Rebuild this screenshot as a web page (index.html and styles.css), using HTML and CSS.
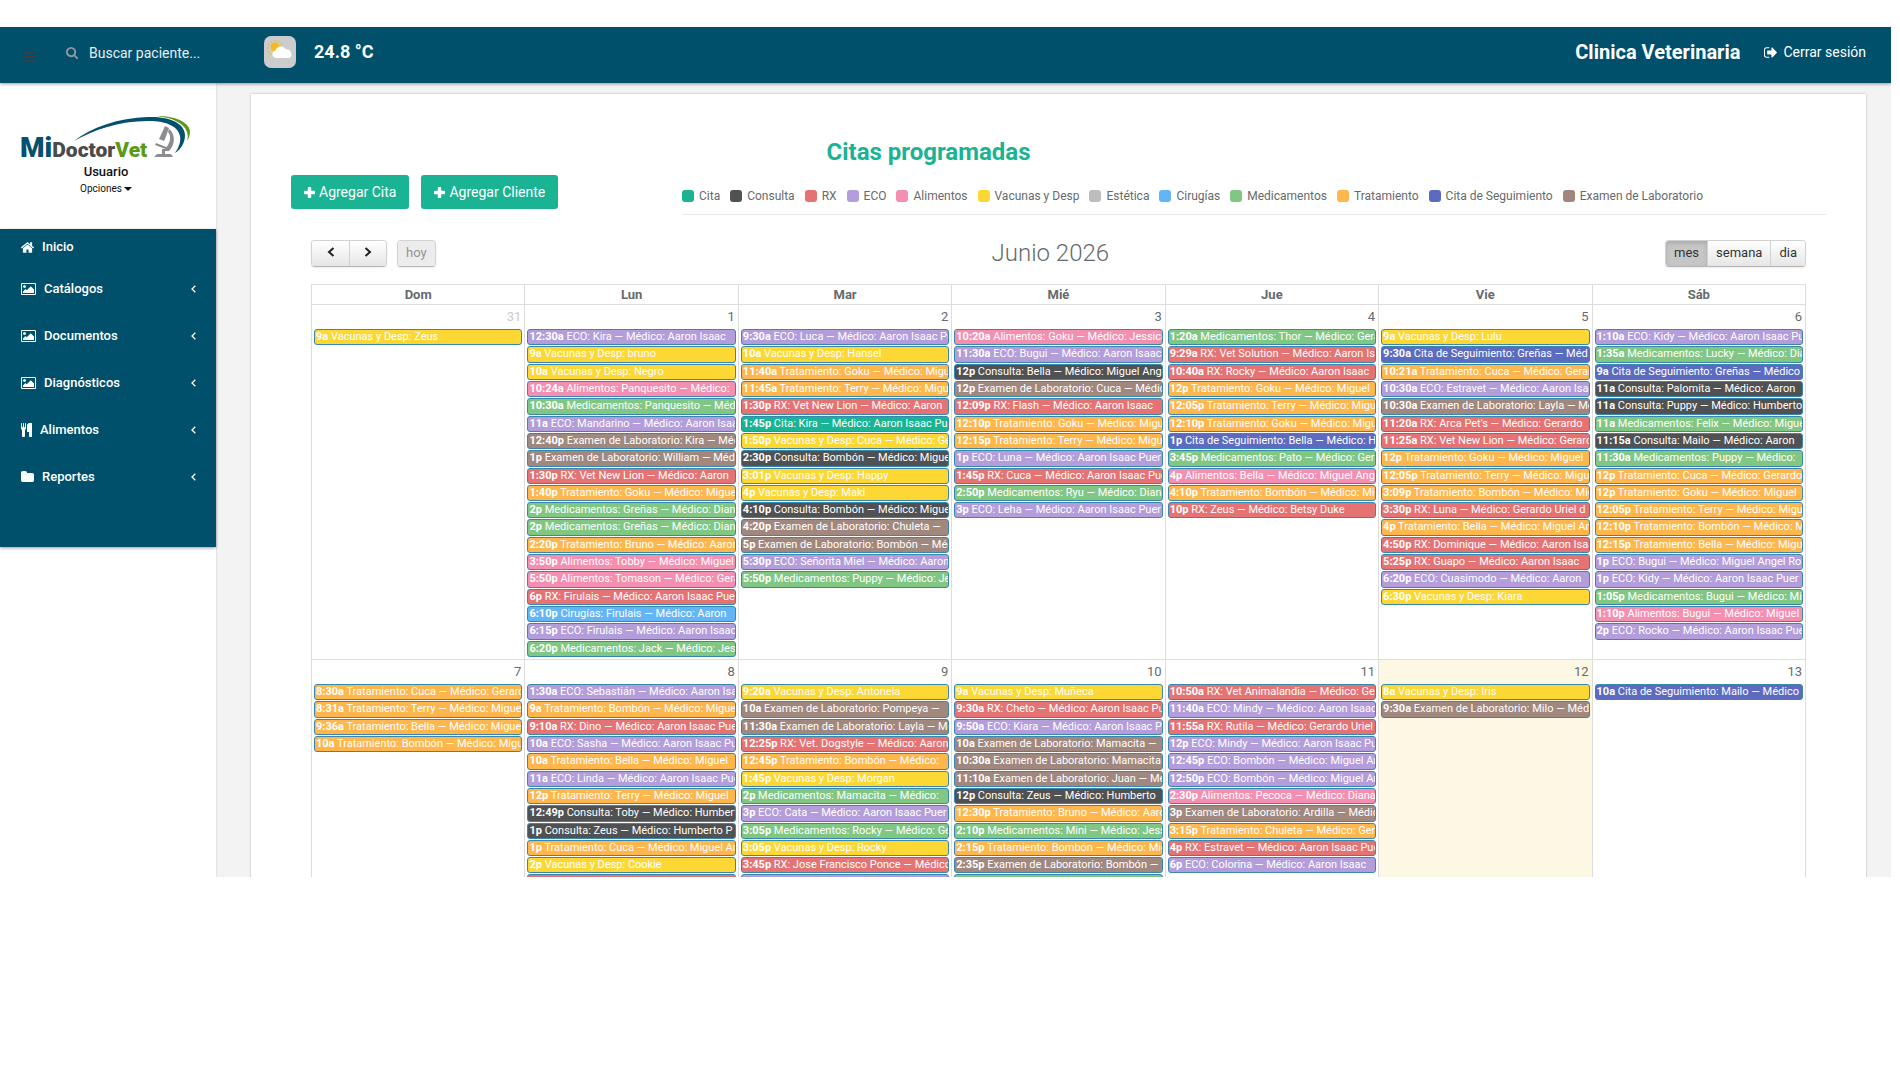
FILE: index.html
```html
<!DOCTYPE html>
<html lang="es">
<head>
<meta charset="utf-8">
<title>Citas programadas</title>
<link rel="stylesheet" href="styles.css">
</head>
<body>
<svg class="defs" aria-hidden="true">
  <symbol id="i-image" viewBox="-64 128 1920 1536"><path d="M576 576q0 80-56 136t-136 56-136-56-56-136 56-136 136-56 136 56 56 136zm1024 384v448h-1408v-192l320-320 160 160 512-512zm96-704h-1600q-13 0-22.500 9.500t-9.500 22.500v1216q0 13 9.500 22.500t22.500 9.500h1600q13 0 22.500-9.500t9.500-22.500v-1216q0-13-9.500-22.500t-22.500-9.500zm160 32v1216q0 66-47 113t-113 47h-1600q-66 0-113-47t-47-113v-1216q0-66 47-113t113-47h1600q66 0 113 47t47 113z"/></symbol>
  <symbol id="i-left" viewBox="0 0 5 8"><path d="M4.300.7L1 4l3.300 3.300" fill="none" stroke="currentColor" stroke-width="1.300"/></symbol>
  <symbol id="i-plus" viewBox="0 0 11 11"><path d="M4.500 0h2q.7 0 .7.700v3.100h3.100q.7 0 .7.700v2q0 .7-.7.700H7.200v3.100q0 .7-.7.700h-2q-.7 0-.7-.7V7.200H.7q-.7 0-.7-.7v-2q0-.7.700-.7h3.100V.7q0-.7.700-.7z"/></symbol>
</svg>
<div class="app">
  <header class="topbar">
    <button class="menu-btn" type="button" aria-label="Menú"><svg width="12" height="11" viewBox="0 0 12 11"><path d="M0 0h12v2H0zM0 4h12v2H0zM0 8h12v2H0z"/></svg></button>
    <form class="search">
      <label for="q" aria-label="Buscar"><svg width="12" height="12" viewBox="64 128 1664 1664"><path d="M1216 832q0-185-131.500-316.500t-316.500-131.500-316.500 131.500-131.500 316.500 131.500 316.500 316.500 131.500 316.500-131.500 131.500-316.500zm512 832q0 52-38 90t-90 38q-54 0-90-38l-343-342q-179 124-399 124-143 0-273.500-55.500t-225-150-150-225-55.500-273.500 55.500-273.500 150-225 225-150 273.500-55.500 273.500 55.500 225 150 150 225 55.500 273.500q0 220-124 399l343 343q37 37 37 90z"/></svg></label>
      <input id="q" type="text" placeholder="Buscar paciente...">
    </form>
    <svg class="weather" width="32" height="32" viewBox="0 0 32 32">
      <rect width="32" height="32" rx="7" fill="#cbcccd"/>
      <g fill="#f5b921"><circle cx="11" cy="11" r="4.500"/><g stroke="#f5b921" stroke-width="1.400" stroke-linecap="round"><path d="M11 5V4.600M7.500 6L7.200 5.500M14.500 6l.3-.5M5 8.500l-.5-.3M17 8.500l.5-.3M4 12h-.4M5 15.500l-.5.300M7 18l-.3.400"/></g></g>
      <path d="M12 22a3.800 3.800 0 0 1-.6-7.500 5.600 5.600 0 0 1 10.300-1.200 4.300 4.300 0 0 1 2 8.700z" fill="#fff"/>
      <circle cx="24.500" cy="19" r="3" fill="#fff"/>
    </svg>
    <span class="temp">24.8 °C</span>
    <span class="clinic">Clinica Veterinaria</span>
    <a class="logout" href="#"><svg width="13" height="11" viewBox="64 256 1568 1280"><path d="M704 1440q0 4 1 20t.5 26.500-3 23.500-10 19.500-20.500 6.500h-320q-119 0-203.500-84.500t-84.500-203.500v-704q0-119 84.500-203.500t203.500-84.500h320q13 0 22.500 9.500t9.500 22.500q0 4 1 20t.5 26.500-3 23.500-10 19.500-20.500 6.500h-320q-66 0-113 47t-47 113v704q0 66 47 113t113 47h312l11.500 1 11.500 3 8 5.500 7 9 2 13.500zm928-544q0 26-19 45l-544 544q-19 19-45 19t-45-19-19-45v-288h-448q-26 0-45-19t-19-45v-384q0-26 19-45t45-19h448v-288q0-26 19-45t45-19 45 19l544 544q19 19 19 45z"/></svg>Cerrar sesión</a>
  </header>
  <div class="body">
    <aside class="sidebar">
      <div class="profile">
        <svg class="logo" width="172" height="46" viewBox="0 0 172 46" role="img" aria-label="MiDoctorVet">
          <path d="M54 26C72 12 98 3 128 2c26-1 37 9 37 18 0 8-4 14-10 18 4-6 6-11 5-17C158 12 148 6 128 6 98 6 74 15 54 26z" fill="#05506e"/>
          <path d="M137 1c22 0 33 8 33 16 0 3-1 6-3 9 1-3 1-6 0-9-3-9-14-14-30-16z" fill="#5a9a16"/>
          <text class="logo-text" x="0" y="42"><tspan class="t-mi">Mi</tspan><tspan class="t-doctor">Doctor</tspan><tspan class="t-vet">Vet</tspan></text>
          <g fill="#8b8d90"><path d="M145 11l4 2-4 11-5-2zM140 22l5 2-1 2-5-2z"/><path d="M149 14c6 4 7 15 0 22h-4v-2c5-5 7-13 3-17zM136 28l13 5-1 2-13-5zM137 39h14l2 3h-19z"/><path d="M142 34h3v6h-3z"/></g>
        </svg>
        <strong class="user">Usuario</strong>
        <a class="options" href="#">Opciones<span class="caret"></span></a>
      </div>
      <nav class="nav">
        <a class="first" href="#"><svg width="13" height="11" viewBox="89 253 1614 1283"><path d="M1472 992v480q0 26-19 45t-45 19h-384v-384h-256v384h-384q-26 0-45-19t-19-45v-480q0-1 .5-3t.5-3l575-474 575 474q1 2 1 6zm223-69l-62 74q-8 9-21 11h-3q-13 0-21-7l-692-577-692 577q-12 8-24 7-13-2-21-11l-62-74q-8-10-7-23.500t11-21.500l719-599q32-26 76-26t76 26l244 204v-195q0-14 9-23t23-9h192q14 0 23 9t9 23v408l219 182q10 8 11 21.500t-7 23.500z"/></svg>Inicio</a>
        <a href="#"><svg width="15" height="12"><use href="#i-image"/></svg>Catálogos<svg class="arrow" width="5" height="8"><use href="#i-left"/></svg></a>
        <a href="#"><svg width="15" height="12"><use href="#i-image"/></svg>Documentos<svg class="arrow" width="5" height="8"><use href="#i-left"/></svg></a>
        <a href="#"><svg width="15" height="12"><use href="#i-image"/></svg>Diagnósticos<svg class="arrow" width="5" height="8"><use href="#i-left"/></svg></a>
        <a href="#"><svg width="11" height="14" viewBox="192 0 1408 1792"><path d="M832 64v640q0 61-35.500 111t-92.500 70v779q0 52-38 90t-90 38h-128q-52 0-90-38t-38-90v-779q-57-20-92.500-70t-35.500-111v-640q0-26 19-45t45-19 45 19 19 45v416q0 26 19 45t45 19 45-19 19-45v-416q0-26 19-45t45-19 45 19 19 45v416q0 26 19 45t45 19 45-19 19-45v-416q0-26 19-45t45-19 45 19 19 45zm768 0v1600q0 52-38 90t-90 38h-128q-52 0-90-38t-38-90v-512h-224q-13 0-22.500-9.500t-9.500-22.500v-800q0-132 94-226t226-94h256q26 0 45 19t19 45z"/></svg>Alimentos<svg class="arrow" width="5" height="8"><use href="#i-left"/></svg></a>
        <a href="#"><svg width="13" height="11" viewBox="64 128 1664 1408"><path d="M1728 608v704q0 92-66 158t-158 66h-1216q-92 0-158-66t-66-158v-960q0-92 66-158t158-66h320q92 0 158 66t66 158v32h672q92 0 158 66t66 158z"/></svg>Reportes<svg class="arrow" width="5" height="8"><use href="#i-left"/></svg></a>
      </nav>
    </aside>
    <main class="main">
      <section class="card">
        <h1>Citas programadas</h1>
        <div class="tools">
          <div class="actions">
            <button type="button"><svg width="11" height="11"><use href="#i-plus"/></svg>Agregar Cita</button>
            <button type="button"><svg width="11" height="11"><use href="#i-plus"/></svg>Agregar Cliente</button>
          </div>
          <ul class="legend">
            <li><i class="cita"></i>Cita</li><li><i class="con"></i>Consulta</li><li><i class="rx"></i>RX</li><li><i class="eco"></i>ECO</li><li><i class="ali"></i>Alimentos</li><li><i class="vac"></i>Vacunas y Desp</li><li><i class="est"></i>Estética</li><li><i class="cir"></i>Cirugías</li><li><i class="med"></i>Medicamentos</li><li><i class="tra"></i>Tratamiento</li><li><i class="seg"></i>Cita de Seguimiento</li><li><i class="lab"></i>Examen de Laboratorio</li>
          </ul>
        </div>
        <div class="calendar">
          <div class="cal-bar">
            <div class="left">
              <div class="group">
                <button class="step" type="button" aria-label="Anterior"><svg width="8" height="10" viewBox="0 0 8 10"><path d="M6.500 1L2 5l4.500 4"/></svg></button><button class="step" type="button" aria-label="Siguiente"><svg width="8" height="10" viewBox="0 0 8 10"><path d="M1.500 1L6 5 1.500 9"/></svg></button>
              </div>
              <div class="group"><button type="button" disabled>hoy</button></div>
            </div>
            <h2>Junio 2026</h2>
            <div class="right"><div class="group"><button class="on" type="button">mes</button><button type="button">semana</button><button type="button">dia</button></div></div>
          </div>
          <table>
            <thead><tr><th>Dom</th><th>Lun</th><th>Mar</th><th>Mié</th><th>Jue</th><th>Vie</th><th>Sáb</th></tr></thead>
            <tbody>
              <tr>
                <td><span class="num other">31</span><ul class="events">
                  <li class="vac"><b>9a</b> Vacunas y Desp: Zeus</li>
                </ul></td>
                <td><span class="num">1</span><ul class="events">
                  <li class="eco"><b>12:30a</b> ECO: Kira — Médico: Aaron Isaac</li>
                  <li class="vac"><b>9a</b> Vacunas y Desp: bruno</li>
                  <li class="vac"><b>10a</b> Vacunas y Desp: Negro</li>
                  <li class="ali"><b>10:24a</b> Alimentos: Panquesito — Médico:</li>
                  <li class="med"><b>10:30a</b> Medicamentos: Panquesito — Méd</li>
                  <li class="eco"><b>11a</b> ECO: Mandarino — Médico: Aaron Isaac</li>
                  <li class="lab"><b>12:40p</b> Examen de Laboratorio: Kira — Méd</li>
                  <li class="lab"><b>1p</b> Examen de Laboratorio: William — Méd</li>
                  <li class="rx"><b>1:30p</b> RX: Vet New Lion — Médico: Aaron</li>
                  <li class="tra"><b>1:40p</b> Tratamiento: Goku — Médico: Miguel</li>
                  <li class="med"><b>2p</b> Medicamentos: Greñas — Médico: Diana</li>
                  <li class="med"><b>2p</b> Medicamentos: Greñas — Médico: Diana</li>
                  <li class="tra"><b>2:20p</b> Tratamiento: Bruno — Médico: Aaron</li>
                  <li class="ali"><b>3:50p</b> Alimentos: Tobby — Médico: Miguel</li>
                  <li class="ali"><b>5:50p</b> Alimentos: Tomason — Médico: Gerardo</li>
                  <li class="rx"><b>6p</b> RX: Firulais — Médico: Aaron Isaac Puer</li>
                  <li class="cir"><b>6:10p</b> Cirugías: Firulais — Médico: Aaron</li>
                  <li class="eco"><b>6:15p</b> ECO: Firulais — Médico: Aaron Isaac</li>
                  <li class="med"><b>6:20p</b> Medicamentos: Jack — Médico: Jessica</li>
                </ul></td>
                <td><span class="num">2</span><ul class="events">
                  <li class="eco"><b>9:30a</b> ECO: Luca — Médico: Aaron Isaac Puer</li>
                  <li class="vac"><b>10a</b> Vacunas y Desp: Hansel</li>
                  <li class="tra"><b>11:40a</b> Tratamiento: Goku — Médico: Miguel</li>
                  <li class="tra"><b>11:45a</b> Tratamiento: Terry — Médico: Miguel</li>
                  <li class="rx"><b>1:30p</b> RX: Vet New Lion — Médico: Aaron</li>
                  <li class="cita"><b>1:45p</b> Cita: Kira — Médico: Aaron Isaac Puer</li>
                  <li class="vac"><b>1:50p</b> Vacunas y Desp: Cuca — Médico: Gerardo</li>
                  <li class="con"><b>2:30p</b> Consulta: Bombón — Médico: Miguel</li>
                  <li class="vac"><b>3:01p</b> Vacunas y Desp: Happy</li>
                  <li class="vac"><b>4p</b> Vacunas y Desp: Maki</li>
                  <li class="con"><b>4:10p</b> Consulta: Bombón — Médico: Miguel</li>
                  <li class="lab"><b>4:20p</b> Examen de Laboratorio: Chuleta —</li>
                  <li class="lab"><b>5p</b> Examen de Laboratorio: Bombón — Méd</li>
                  <li class="eco"><b>5:30p</b> ECO: Señorita Miel — Médico: Aaron</li>
                  <li class="med"><b>5:50p</b> Medicamentos: Puppy — Médico: Jessica</li>
                </ul></td>
                <td><span class="num">3</span><ul class="events">
                  <li class="ali"><b>10:20a</b> Alimentos: Goku — Médico: Jessica</li>
                  <li class="eco"><b>11:30a</b> ECO: Bugui — Médico: Aaron Isaac</li>
                  <li class="con"><b>12p</b> Consulta: Bella — Médico: Miguel Angel</li>
                  <li class="lab"><b>12p</b> Examen de Laboratorio: Cuca — Médico</li>
                  <li class="rx"><b>12:09p</b> RX: Flash — Médico: Aaron Isaac</li>
                  <li class="tra"><b>12:10p</b> Tratamiento: Goku — Médico: Miguel</li>
                  <li class="tra"><b>12:15p</b> Tratamiento: Terry — Médico: Miguel</li>
                  <li class="eco"><b>1p</b> ECO: Luna — Médico: Aaron Isaac Puer</li>
                  <li class="rx"><b>1:45p</b> RX: Cuca — Médico: Aaron Isaac Puer</li>
                  <li class="med"><b>2:50p</b> Medicamentos: Ryu — Médico: Diana</li>
                  <li class="eco"><b>3p</b> ECO: Leha — Médico: Aaron Isaac Puer</li>
                </ul></td>
                <td><span class="num">4</span><ul class="events">
                  <li class="med"><b>1:20a</b> Medicamentos: Thor — Médico: Gerardo</li>
                  <li class="rx"><b>9:29a</b> RX: Vet Solution — Médico: Aaron Isaac</li>
                  <li class="rx"><b>10:40a</b> RX: Rocky — Médico: Aaron Isaac</li>
                  <li class="tra"><b>12p</b> Tratamiento: Goku — Médico: Miguel</li>
                  <li class="tra"><b>12:05p</b> Tratamiento: Terry — Médico: Miguel</li>
                  <li class="tra"><b>12:10p</b> Tratamiento: Goku — Médico: Miguel</li>
                  <li class="seg"><b>1p</b> Cita de Seguimiento: Bella — Médico: H</li>
                  <li class="med"><b>3:45p</b> Medicamentos: Pato — Médico: Gerardo</li>
                  <li class="ali"><b>4p</b> Alimentos: Bella — Médico: Miguel Angel</li>
                  <li class="tra"><b>4:10p</b> Tratamiento: Bombón — Médico: Miguel</li>
                  <li class="rx"><b>10p</b> RX: Zeus — Médico: Betsy Duke</li>
                </ul></td>
                <td><span class="num">5</span><ul class="events">
                  <li class="vac"><b>9a</b> Vacunas y Desp: Lulu</li>
                  <li class="seg"><b>9:30a</b> Cita de Seguimiento: Greñas — Méd</li>
                  <li class="tra"><b>10:21a</b> Tratamiento: Cuca — Médico: Gerardo</li>
                  <li class="eco"><b>10:30a</b> ECO: Estravet — Médico: Aaron Isaac</li>
                  <li class="lab"><b>10:30a</b> Examen de Laboratorio: Layla — Méd</li>
                  <li class="rx"><b>11:20a</b> RX: Arca Pet's — Médico: Gerardo</li>
                  <li class="rx"><b>11:25a</b> RX: Vet New Lion — Médico: Gerardo</li>
                  <li class="tra"><b>12p</b> Tratamiento: Goku — Médico: Miguel</li>
                  <li class="tra"><b>12:05p</b> Tratamiento: Terry — Médico: Miguel</li>
                  <li class="tra"><b>3:09p</b> Tratamiento: Bombón — Médico: Miguel</li>
                  <li class="rx"><b>3:30p</b> RX: Luna — Médico: Gerardo Uriel d</li>
                  <li class="tra"><b>4p</b> Tratamiento: Bella — Médico: Miguel An</li>
                  <li class="rx"><b>4:50p</b> RX: Dominique — Médico: Aaron Isaac</li>
                  <li class="rx"><b>5:25p</b> RX: Guapo — Médico: Aaron Isaac</li>
                  <li class="eco"><b>6:20p</b> ECO: Cuasimodo — Médico: Aaron</li>
                  <li class="vac"><b>6:30p</b> Vacunas y Desp: Kiara</li>
                </ul></td>
                <td><span class="num">6</span><ul class="events">
                  <li class="eco"><b>1:10a</b> ECO: Kidy — Médico: Aaron Isaac Puer</li>
                  <li class="med"><b>1:35a</b> Medicamentos: Lucky — Médico: Diana</li>
                  <li class="seg"><b>9a</b> Cita de Seguimiento: Greñas — Médico</li>
                  <li class="con"><b>11a</b> Consulta: Palomita — Médico: Aaron</li>
                  <li class="con"><b>11a</b> Consulta: Puppy — Médico: Humberto</li>
                  <li class="med"><b>11a</b> Medicamentos: Felix — Médico: Miguel</li>
                  <li class="con"><b>11:15a</b> Consulta: Mailo — Médico: Aaron</li>
                  <li class="med"><b>11:30a</b> Medicamentos: Puppy — Médico:</li>
                  <li class="tra"><b>12p</b> Tratamiento: Cuca — Médico: Gerardo</li>
                  <li class="tra"><b>12p</b> Tratamiento: Goku — Médico: Miguel</li>
                  <li class="tra"><b>12:05p</b> Tratamiento: Terry — Médico: Miguel</li>
                  <li class="tra"><b>12:10p</b> Tratamiento: Bombón — Médico: M</li>
                  <li class="tra"><b>12:15p</b> Tratamiento: Bella — Médico: Miguel</li>
                  <li class="eco"><b>1p</b> ECO: Bugui — Médico: Miguel Angel Ro</li>
                  <li class="eco"><b>1p</b> ECO: Kidy — Médico: Aaron Isaac Puer</li>
                  <li class="med"><b>1:05p</b> Medicamentos: Bugui — Médico: Miguel</li>
                  <li class="ali"><b>1:10p</b> Alimentos: Bugui — Médico: Miguel</li>
                  <li class="eco"><b>2p</b> ECO: Rocko — Médico: Aaron Isaac Puer</li>
                </ul></td>
              </tr>
              <tr>
                <td><span class="num">7</span><ul class="events">
                  <li class="tra"><b>8:30a</b> Tratamiento: Cuca — Médico: Gerardo</li>
                  <li class="tra"><b>8:31a</b> Tratamiento: Terry — Médico: Miguel</li>
                  <li class="tra"><b>9:36a</b> Tratamiento: Bella — Médico: Miguel</li>
                  <li class="tra"><b>10a</b> Tratamiento: Bombón — Médico: Miguel</li>
                </ul></td>
                <td><span class="num">8</span><ul class="events">
                  <li class="eco"><b>1:30a</b> ECO: Sebastián — Médico: Aaron Isaac</li>
                  <li class="tra"><b>9a</b> Tratamiento: Bombón — Médico: Miguel</li>
                  <li class="rx"><b>9:10a</b> RX: Dino — Médico: Aaron Isaac Puer</li>
                  <li class="eco"><b>10a</b> ECO: Sasha — Médico: Aaron Isaac Puer</li>
                  <li class="tra"><b>10a</b> Tratamiento: Bella — Médico: Miguel</li>
                  <li class="eco"><b>11a</b> ECO: Linda — Médico: Aaron Isaac Puer</li>
                  <li class="tra"><b>12p</b> Tratamiento: Terry — Médico: Miguel</li>
                  <li class="con"><b>12:49p</b> Consulta: Toby — Médico: Humberto</li>
                  <li class="con"><b>1p</b> Consulta: Zeus — Médico: Humberto P</li>
                  <li class="tra"><b>1p</b> Tratamiento: Cuca — Médico: Miguel An</li>
                  <li class="vac"><b>2p</b> Vacunas y Desp: Cookie</li>
                  <li class="rx"></li>
                </ul></td>
                <td><span class="num">9</span><ul class="events">
                  <li class="vac"><b>9:20a</b> Vacunas y Desp: Antonela</li>
                  <li class="lab"><b>10a</b> Examen de Laboratorio: Pompeya —</li>
                  <li class="lab"><b>11:30a</b> Examen de Laboratorio: Layla — Méd</li>
                  <li class="rx"><b>12:25p</b> RX: Vet. Dogstyle — Médico: Aaron</li>
                  <li class="tra"><b>12:45p</b> Tratamiento: Bombón — Médico:</li>
                  <li class="vac"><b>1:45p</b> Vacunas y Desp: Morgan</li>
                  <li class="med"><b>2p</b> Medicamentos: Mamacita — Médico:</li>
                  <li class="eco"><b>3p</b> ECO: Cata — Médico: Aaron Isaac Puer</li>
                  <li class="med"><b>3:05p</b> Medicamentos: Rocky — Médico: Gerardo</li>
                  <li class="vac"><b>3:05p</b> Vacunas y Desp: Rocky</li>
                  <li class="rx"><b>3:45p</b> RX: Jose Francisco Ponce — Médico</li>
                  <li class="eco"></li>
                </ul></td>
                <td><span class="num">10</span><ul class="events">
                  <li class="vac"><b>9a</b> Vacunas y Desp: Muñeca</li>
                  <li class="rx"><b>9:30a</b> RX: Cheto — Médico: Aaron Isaac Puer</li>
                  <li class="eco"><b>9:50a</b> ECO: Kiara — Médico: Aaron Isaac Puer</li>
                  <li class="lab"><b>10a</b> Examen de Laboratorio: Mamacita —</li>
                  <li class="lab"><b>10:30a</b> Examen de Laboratorio: Mamacita</li>
                  <li class="lab"><b>11:10a</b> Examen de Laboratorio: Juan — Méd</li>
                  <li class="con"><b>12p</b> Consulta: Zeus — Médico: Humberto</li>
                  <li class="tra"><b>12:30p</b> Tratamiento: Bruno — Médico: Aaron</li>
                  <li class="med"><b>2:10p</b> Medicamentos: Mini — Médico: Jessica</li>
                  <li class="tra"><b>2:15p</b> Tratamiento: Bombón — Médico: Miguel</li>
                  <li class="lab"><b>2:35p</b> Examen de Laboratorio: Bombón —</li>
                  <li class="med"></li>
                </ul></td>
                <td><span class="num">11</span><ul class="events">
                  <li class="rx"><b>10:50a</b> RX: Vet Animalandia — Médico: Gerardo</li>
                  <li class="eco"><b>11:40a</b> ECO: Mindy — Médico: Aaron Isaac</li>
                  <li class="rx"><b>11:55a</b> RX: Rutila — Médico: Gerardo Uriel</li>
                  <li class="eco"><b>12p</b> ECO: Mindy — Médico: Aaron Isaac Puer</li>
                  <li class="eco"><b>12:45p</b> ECO: Bombón — Médico: Miguel An</li>
                  <li class="eco"><b>12:50p</b> ECO: Bombón — Médico: Miguel An</li>
                  <li class="ali"><b>2:30p</b> Alimentos: Pecoca — Médico: Diana</li>
                  <li class="lab"><b>3p</b> Examen de Laboratorio: Ardilla — Médico</li>
                  <li class="tra"><b>3:15p</b> Tratamiento: Chuleta — Médico: Gerardo</li>
                  <li class="rx"><b>4p</b> RX: Estravet — Médico: Aaron Isaac Puer</li>
                  <li class="eco"><b>6p</b> ECO: Colorina — Médico: Aaron Isaac</li>
                </ul></td>
                <td class="today"><span class="num">12</span><ul class="events">
                  <li class="vac"><b>8a</b> Vacunas y Desp: Iris</li>
                  <li class="lab"><b>9:30a</b> Examen de Laboratorio: Milo — Méd</li>
                </ul></td>
                <td><span class="num">13</span><ul class="events">
                  <li class="seg"><b>10a</b> Cita de Seguimiento: Mailo — Médico</li>
                </ul></td>
              </tr>
            </tbody>
          </table>
        </div>
      </section>
    </main>
  </div>
</div>
</body>
</html>
```
FILE: styles.css
```css
* { box-sizing: border-box; }
body {
  margin: 0;
  height: 100vh;
  padding: 27px 9px 197px 0;
  display: flex;
  flex-direction: column;
  background: #fff;
  color: #676a6c;
  font: 13px/20px Roboto, sans-serif;
}
.defs { display: none; }
a { color: inherit; text-decoration: none; }
ul { list-style: none; margin: 0; padding: 0; }
button { font: inherit; cursor: pointer; }
svg { fill: currentColor; flex: none; }

.app {
  flex: 1;
  min-height: 0;
  display: flex;
  flex-direction: column;
  overflow: hidden;
  background: #f3f3f4;
}

/* top bar */
.topbar {
  flex: none;
  height: 56px;
  padding: 0 25px 6px 24px;
  display: flex;
  align-items: center;
  background: #004f6b;
  color: #fff;
  box-shadow: 0 1px 3px rgba(0, 0, 0, .4);
  z-index: 1;
}
.menu-btn { display: flex; padding: 11px 0 0; border: 0; background: none; color: #3a3f47; }
.search { display: flex; align-items: center; gap: 11px; margin-left: 30px; width: 198px; padding-top: 2px; }
.search label { display: flex; color: #8e9aa2; }
.search input { width: 150px; padding: 0; border: 0; background: none; color: #fff; font: 14px/20px Roboto, sans-serif; outline: 0; }
.search input::placeholder { color: #e6eff3; opacity: 1; }
.temp { margin-left: 18px; font-size: 18px; font-weight: 700; }
.clinic { margin-left: auto; font-size: 20px; font-weight: 700; }
.logout { display: flex; align-items: center; gap: 6px; margin-left: 24px; font-size: 14px; }

.body { flex: 1; min-height: 0; display: flex; }

/* side menu */
.sidebar { flex: none; width: 216px; background: #fff; box-shadow: 0 0 2px rgba(0, 0, 0, .2); }
.profile { height: 146px; padding: 32px 0 0 20px; display: flex; flex-direction: column; color: #111; }
.logo { display: block; }
.logo-text { font-family: Roboto, sans-serif; font-weight: 900; }
.t-mi { font-size: 28px; fill: #05506e; }
.t-doctor { font-size: 21px; fill: #4a4a4c; }
.t-vet { font-size: 21px; fill: #5a9a16; }
.user { width: 172px; margin-top: 1px; text-align: center; font-weight: 500; }
.options { width: 172px; text-align: center; font-size: 10px; line-height: 14px; }
.caret { display: inline-block; margin-left: 2px; border: 4px solid transparent; border-top-color: #111; border-bottom: 0; vertical-align: middle; }
.nav { padding-bottom: 47px; background: #004f6b; color: #fff; box-shadow: 0 1px 3px rgba(0, 0, 0, .4); }
.nav a { display: flex; align-items: center; gap: 8px; height: 47px; padding: 0 20px 0 21px; font-weight: 500; }
.nav .first { height: 36px; }
.nav .arrow { margin-left: auto; }

/* content card */
.main { flex: 1; min-width: 0; padding: 11px 25px 0 35px; overflow: hidden; }
.card { min-height: 100%; padding: 43px 40px 0; background: #fff; box-shadow: 0 0 2px rgba(0, 0, 0, .3); }
.card h1 { margin: 0 260px 8px 0; font-size: 24px; line-height: 30px; color: #1ab394; text-align: center; }
.tools { display: flex; height: 52px; }
.actions { display: flex; gap: 12px; width: 391px; align-items: flex-start; }
.actions button { display: flex; align-items: center; gap: 4px; height: 34px; padding: 0 13px; border: 0; border-radius: 3px; background: #1ab394; color: #fff; font-size: 14px; }
.legend { flex: 1; display: flex; gap: 10px; height: 40px; padding-top: 11px; border-bottom: 1px solid #e7eaec; font-size: 12px; }
.legend li { display: flex; gap: 5px; height: 20px; align-items: center; white-space: nowrap; }
.legend i { width: 12px; height: 12px; border-radius: 3px; }

/* calendar */
.calendar { padding: 0 20px; }
.cal-bar { display: grid; grid-template-columns: auto 1fr auto; align-items: center; height: 57px; padding: 8px 0 13px; }
.left { display: flex; gap: 10px; }
.right { display: flex; justify-content: flex-end; }
.cal-bar h2 { margin: 0; font-size: 24px; line-height: 28px; font-weight: 300; text-align: center; }
.group { display: flex; height: 27px; border: 1px solid #d2d2d2; border-bottom-color: #b5b5b5; border-radius: 4px; overflow: hidden; box-shadow: 0 1px 2px rgba(0, 0, 0, .08); }
.group button { padding: 0 8px; border: 0; border-left: 1px solid #d2d2d2; background: linear-gradient(#fff, #e6e6e6); color: #333; }
.group button:first-child { border-left: 0; }
.group .step { width: 37px; padding: 0; }
.step path { fill: none; stroke: #222; stroke-width: 2; }
.group button:disabled { background: #ececec; color: #949494; cursor: default; }
.group .on { background: #c6c6c6; box-shadow: inset 0 2px 4px rgba(0, 0, 0, .15); }

table { width: 100%; table-layout: fixed; border-collapse: collapse; }
th, td { padding: 0; border: 1px solid #ddd; }
th { height: 20px; line-height: 19px; }
td { padding: 0 2px; vertical-align: top; }
.num { display: block; height: 24px; padding-right: 1px; line-height: 23px; text-align: right; }
.other { opacity: .35; }
.today { background: #fcf8e3; }
.events { display: grid; grid-template-rows: repeat(19, 1fr); gap: 1px; height: 328px; margin-bottom: 2px; }
.events li { min-height: 0; padding-left: 1px; border: 1px solid #3a87ad; border-radius: 3px; color: #fff; font-size: 11px; line-height: 14px; white-space: nowrap; overflow: hidden; }

.cita { background: #1ab394; }
.con { background: #4f5152; }
.rx { background: #e57373; }
.eco { background: #b39ddb; }
.ali { background: #f48fb1; }
.vac { background: #fdd835; }
.est { background: #bdbdbd; }
.cir { background: #64b5f6; }
.med { background: #81c784; }
.tra { background: #ffb74d; }
.seg { background: #5c6bc0; }
.lab { background: #a1887f; }
```
